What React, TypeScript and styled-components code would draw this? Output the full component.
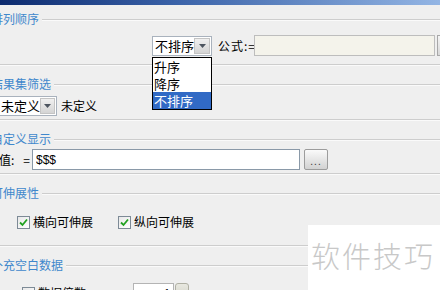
import { createGlobalStyle } from "styled-components"
import styled from "styled-components"

const GlobalStyle = createGlobalStyle`
  html, body {
    margin: 0;
    padding: 0;
    background: #efefef;
  }
  body {
    font-family: "Noto Sans CJK SC", "DejaVu Sans", sans-serif;
    font-size: 12px;
    color: #000;
  }
`

interface SectionProps {
  title: string
  gap: number
  bottom: number
  children: React.ReactNode
}
const Section = ({ title, gap, bottom, children }: SectionProps) => {
  return (
    <Fieldset>
      <Legend>
        <LegendText>{title}</LegendText>
        <LegendLine />
      </Legend>
      <SectionBody $gap={gap} $bottom={bottom}>
        {children}
      </SectionBody>
    </Fieldset>
  )
}

const ArrowIcon = () => (
  <svg width="7" height="4" viewBox="0 0 7 4">
    <polygon points="0,0 7,0 3.5,4" fill="#4d5560" />
  </svg>
)

const CheckIcon = () => (
  <svg width="9" height="9" viewBox="0 0 9 9">
    <polyline points="1,4.5 3.5,7 8,1.5" fill="none" stroke="#21a121" strokeWidth="1.8" />
  </svg>
)

const App = () => {
  return (
    <Window>
      <GlobalStyle />
      <TitleBar />
      <Section title="排列顺序" gap={8} bottom={8}>
        <Row $left={152}>
          <ComboWrap>
            <Combo $width={60}>
              <ComboText>不排序</ComboText>
              <ComboArrow>
                <ArrowIcon />
              </ComboArrow>
            </Combo>
            <DropList>
              <DropItem>升序</DropItem>
              <DropItem>降序</DropItem>
              <DropItem $selected>不排序</DropItem>
            </DropList>
          </ComboWrap>
          <FormulaLabel>公式:=</FormulaLabel>
          <FormulaInput />
          <SideButton />
        </Row>
      </Section>
      <Section title="结果集筛选" gap={4} bottom={3}>
        <Row $left={-2}>
          <Combo $width={59}>
            <ComboText>未定义</ComboText>
            <ComboArrow>
              <ArrowIcon />
            </ComboArrow>
          </Combo>
          <Label $ml={4}>未定义</Label>
        </Row>
      </Section>
      <Section title="自定义显示" gap={2} bottom={3}>
        <Row $left={-1}>
          <Label>值:</Label>
          <Label $ml={9}>=</Label>
          <ValueInput defaultValue="$$$" />
          <DotsButton>...</DotsButton>
        </Row>
      </Section>
      <Section title="可伸展性" gap={13} bottom={15}>
        <Row $left={17}>
          <CheckBox>
            <CheckIcon />
          </CheckBox>
          <Label $ml={3}>横向可伸展</Label>
          <CheckBox $ml={25}>
            <CheckIcon />
          </CheckBox>
          <Label $ml={3}>纵向可伸展</Label>
        </Row>
      </Section>
      <Section title="补充空白数据" gap={10} bottom={0}>
        <Row $left={22}>
          <CheckBox />
          <Label $ml={3}>数据倍数</Label>
          <SpinInput>1</SpinInput>
          <SpinButton />
        </Row>
      </Section>
      <Watermark>软件技巧</Watermark>
    </Window>
  )
}

const Window = styled.div`
  position: relative;
  width: 440px;
  height: 290px;
  overflow: hidden;
  background: #efefef;
`
const TitleBar = styled.div`
  height: 5px;
  background: linear-gradient(to right, #0c2a6e 0%, #3a62a8 40%, #93b5e4 100%);
`
const Fieldset = styled.div`
  margin-top: 6px;
  & + & {
    margin-top: 11px;
  }
`
const Legend = styled.div`
  display: flex;
  align-items: center;
  height: 16px;
  margin-left: -9px;
`
const LegendText = styled.span`
  color: #3f88cc;
  font-size: 12px;
  line-height: 16px;
  white-space: nowrap;
`
const LegendLine = styled.div`
  flex: 1;
  height: 1px;
  margin-left: 3px;
  background: #cdcdcd;
  box-shadow: 0 1px 0 #fafafa;
`
const SectionBody = styled.div<{ $gap: number; $bottom: number }>`
  padding-top: ${(p) => p.$gap}px;
  padding-bottom: ${(p) => p.$bottom}px;
  border-bottom: 1px solid #cdcdcd;
  box-shadow: 0 1px 0 #fafafa;
`
const Row = styled.div<{ $left: number }>`
  display: flex;
  align-items: center;
  margin-left: ${(p) => p.$left}px;
  white-space: nowrap;
  & > * {
    flex-shrink: 0;
  }
`
const Label = styled.span<{ $ml?: number }>`
  margin-left: ${(p) => p.$ml || 0}px;
  font-size: 12px;
  line-height: 16px;
`
const FormulaLabel = styled.span`
  width: 36px;
  margin-left: 6px;
  font-size: 12px;
  line-height: 16px;
  letter-spacing: 1px;
`
const ComboWrap = styled.div`
  position: relative;
`
const Combo = styled.div<{ $width: number }>`
  display: flex;
  align-items: center;
  justify-content: space-between;
  box-sizing: border-box;
  width: ${(p) => p.$width}px;
  height: 20px;
  padding: 1px;
  background: #fff;
  border: 1px solid #a9b2bd;
`
const ComboText = styled.span`
  padding-left: 1px;
  font-size: 13px;
  line-height: 16px;
`
const ComboArrow = styled.div`
  display: flex;
  align-items: center;
  justify-content: center;
  box-sizing: border-box;
  width: 17px;
  height: 16px;
  background: linear-gradient(#f0f0f0, #d4d4d4);
  border: 1px solid #c4c4c4;
`
const DropList = styled.div`
  position: absolute;
  top: 21px;
  left: 0;
  box-sizing: border-box;
  width: 60px;
  background: #fff;
  border: 1px solid #000;
  z-index: 2;
`
const DropItem = styled.div<{ $selected?: boolean }>`
  height: 17px;
  padding-left: 1px;
  font-size: 13px;
  line-height: 17px;
  color: ${(p) => (p.$selected ? "#fff" : "#000")};
  background: ${(p) => (p.$selected ? "#316ac5" : "transparent")};
`
const FormulaInput = styled.div`
  box-sizing: border-box;
  width: 181px;
  height: 21px;
  background: #f4f3eb;
  border: 1px solid #bdbdbd;
`
const SideButton = styled.div`
  box-sizing: border-box;
  width: 20px;
  height: 21px;
  margin-left: 2px;
  background: linear-gradient(#f4f4f4, #d8d8d8);
  border: 1px solid #a8a8a8;
`
const ValueInput = styled.input`
  box-sizing: border-box;
  width: 268px;
  height: 21px;
  margin-left: 2px;
  padding: 0 3px;
  background: #fff;
  border: 1px solid #8a99a8;
  font-family: "Liberation Sans", Arial, sans-serif;
  font-size: 12px;
  outline: none;
`
const DotsButton = styled.div`
  box-sizing: border-box;
  width: 24px;
  height: 21px;
  margin-left: 4px;
  display: flex;
  align-items: flex-end;
  justify-content: center;
  background: linear-gradient(#fafafa, #e6e6e6 50%, #d2d2d2);
  border: 1px solid #9c9c9c;
  border-radius: 2px;
  font-family: "Liberation Sans", Arial, sans-serif;
  font-size: 10px;
  line-height: 14px;
  letter-spacing: 1px;
  color: #333;
`
const CheckBox = styled.div<{ $ml?: number }>`
  display: flex;
  align-items: center;
  justify-content: center;
  box-sizing: border-box;
  width: 13px;
  height: 13px;
  margin-left: ${(p) => p.$ml || 0}px;
  background: linear-gradient(135deg, #e8e8e8, #fff);
  border: 1px solid #7d8a96;
`
const SpinInput = styled.div`
  box-sizing: border-box;
  width: 41px;
  height: 20px;
  margin-left: 47px;
  padding-right: 3px;
  text-align: right;
  background: #fff;
  border: 1px solid #b4b4b4;
  font-family: "Liberation Sans", Arial, sans-serif;
  font-size: 11px;
  line-height: 18px;
`
const SpinButton = styled.div`
  box-sizing: border-box;
  width: 14px;
  height: 20px;
  margin-left: 1px;
  background: linear-gradient(#e8e8e0, #cfcfc4);
  border: 1px solid #b0b0a4;
  border-radius: 3px;
`
const Watermark = styled.div`
  position: absolute;
  left: 308px;
  top: 225px;
  width: 132px;
  height: 65px;
  box-sizing: border-box;
  padding: 10px 0 0 3px;
  background: #fff;
  color: #c8c8c8;
  font-family: "Noto Sans CJK SC", sans-serif;
  font-weight: 300;
  font-size: 29px;
  line-height: 40px;
  letter-spacing: 2px;
  white-space: nowrap;
`

export default App
